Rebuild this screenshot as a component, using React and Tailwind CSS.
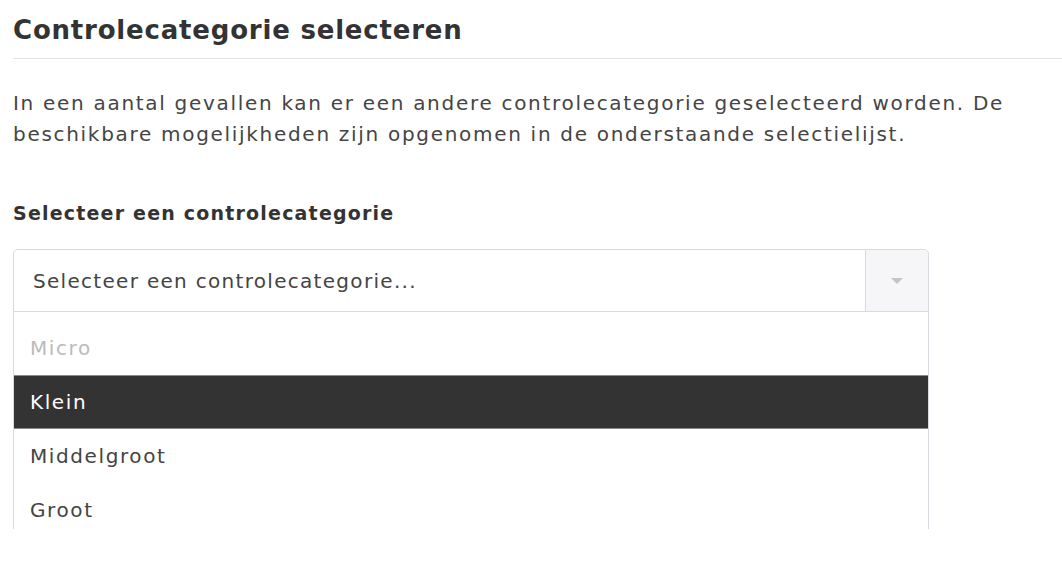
const options = [
  { label: 'Micro', disabled: true },
  { label: 'Klein', active: true },
  { label: 'Middelgroot' },
  { label: 'Groot' },
];

function Dropdown() {
  return (
    <div className="w-[916px]">
      <div className="flex h-[63px] rounded-t-[5px] border border-[#d9d9e0] bg-white">
        <div className="flex flex-1 items-center pl-[19px] text-[20px] tracking-[1.3px] text-[#444]">
          Selecteer een controlecategorie...
        </div>
        <div className="flex w-[63px] items-center justify-center rounded-tr-[5px] border-l border-[#d9d9e0] bg-[#f6f6f8]">
          <svg width="12" height="6" viewBox="0 0 12 6">
            <path d="M0 0 L12 0 L6 6 Z" fill="#c4c4c8" />
          </svg>
        </div>
      </div>
      <div className="h-[217px] overflow-hidden border-x border-[#d9d9e0] pt-[9px]">
        {options.map((o) => (
          <div
            key={o.label}
            className={
              o.active
                ? 'flex h-[54px] items-center border-y border-[#8a8a8a] bg-[#333] pl-[16px] text-[20px] tracking-[1.6px] text-white'
                : o.disabled
                ? 'flex h-[54px] items-center pl-[16px] text-[20px] tracking-[1.6px] text-[#bbb]'
                : 'flex h-[54px] items-center pl-[16px] text-[20px] tracking-[1.6px] text-[#444]'
            }
          >
            {o.label}
          </div>
        ))}
      </div>
    </div>
  );
}

export default function App() {
  return (
    <div className="min-h-[563px] bg-white pl-[13px] pt-[12px] font-['DejaVu_Sans',sans-serif] text-[#333]">
      <h2 className="text-[26px] font-bold leading-[36px] tracking-[0.8px] text-[#333]">Controlecategorie selecteren</h2>
      <div className="mt-[10px] h-px bg-[#e2e2ea]" />
      <p className="mt-[29px] text-[20px] leading-[31px] tracking-[1.7px] text-[#454545]">
        In een aantal gevallen kan er een andere controlecategorie geselecteerd worden. De
        <br />
        beschikbare mogelijkheden zijn opgenomen in de onderstaande selectielijst.
      </p>
      <div className="mt-[51px] text-[19px] font-bold leading-[24px] tracking-[1.2px] text-[#333]">Selecteer een controlecategorie</div>
      <div className="mt-[24px]">
        <Dropdown />
      </div>
    </div>
  );
}
